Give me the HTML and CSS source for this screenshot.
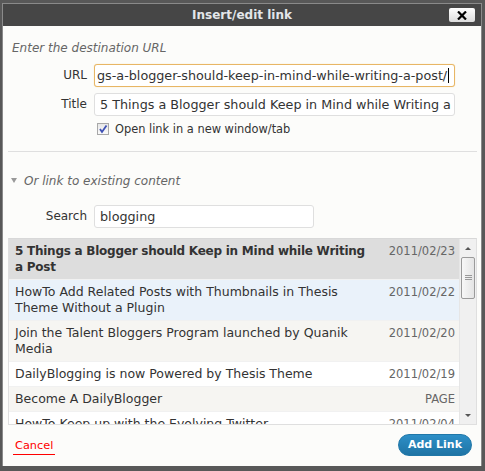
FILE: index.html
```html
<!DOCTYPE html>
<html lang="en">
<head>
	<meta charset="UTF-8">
	<title>Insert/edit link</title>
	<link rel="stylesheet" href="styles.css">
</head>
<body>
	<div class="dialog">
		<div class="titlebar">
			<span class="title">Insert/edit link</span>
			<span class="close">
				<svg width="10" height="9" viewBox="0 0 10 9"><path d="M1 0.5L9 8.5M9 0.5L1 8.5" stroke="#000" stroke-width="2.2"/></svg>
			</span>
		</div>
		<div class="content">
			<div class="url-section">
				<p class="hint">Enter the destination URL</p>
				<div class="field">
					<span class="label">URL</span>
					<div class="input url-input focused"><span class="url-text">gs-a-blogger-should-keep-in-mind-while-writing-a-post/</span><span class="caret"></span></div>
				</div>
				<div class="field">
					<span class="label">Title</span>
					<div class="input title-input">5 Things a Blogger should Keep in Mind while Writing a Post</div>
				</div>
				<div class="check-row">
					<span class="checkbox">
						<svg width="10" height="10" viewBox="0 0 10 10"><path d="M2 5L4 8L8.5 1.5" fill="none" stroke="#3f51b5" stroke-width="1.8"/></svg>
					</span>
					<span class="check-label">Open link in a new window/tab</span>
				</div>
			</div>
			<div class="search-section">
				<p class="toggle"><span class="arrow"></span>Or link to existing content</p>
				<div class="field">
					<span class="label">Search</span>
					<div class="input search-input">blogging</div>
				</div>
				<div class="results">
					<ul class="items">
						<li class="item selected"><span class="item-title">5 Things a Blogger should Keep in Mind while Writing a Post</span><span class="item-info">2011/02/23</span></li>
						<li class="item hover"><span class="item-title">HowTo Add Related Posts with Thumbnails in Thesis Theme Without a Plugin</span><span class="item-info">2011/02/22</span></li>
						<li class="item alt"><span class="item-title">Join the Talent Bloggers Program launched by Quanik Media</span><span class="item-info">2011/02/20</span></li>
						<li class="item"><span class="item-title">DailyBlogging is now Powered by Thesis Theme</span><span class="item-info">2011/02/19</span></li>
						<li class="item alt"><span class="item-title">Become A DailyBlogger</span><span class="item-info">PAGE</span></li>
						<li class="item"><span class="item-title">HowTo Keep up with the Evolving Twitter</span><span class="item-info">2011/02/04</span></li>
					</ul>
					<div class="scrollbar">
						<span class="arrow-up"></span>
						<div class="track">
							<div class="thumb"><span class="grip"></span></div>
						</div>
						<span class="arrow-down"></span>
					</div>
				</div>
			</div>
		</div>
		<div class="footer">
			<a class="cancel" href="#">Cancel</a>
			<span class="button">Add Link</span>
		</div>
	</div>
</body>
</html>
```

FILE: styles.css
```css
*{
	margin: 0;
	padding: 0;
	box-sizing: border-box;
}
body{
	background: #585858;
	font-family: "DejaVu Sans", Verdana, sans-serif;
	color: #333;
}
.dialog{
	width: 478px;
	height: 462px;
	margin: 4px 0 0 3px;
	background: #fcfcfa;
	display: flex;
	flex-direction: column;
	outline: 1px solid #8a8a8a;
}
.titlebar{
	height: 22px;
	background: #464646;
	position: relative;
	display: flex;
	align-items: center;
	justify-content: center;
}
.title{
	color: #e3e6ea;
	font-size: 12px;
	font-weight: bold;
}
.close{
	position: absolute;
	right: 6px;
	top: 4px;
	width: 26px;
	height: 14px;
	border-radius: 2px;
	background: linear-gradient(#ffffff, #dcdcdc);
	display: flex;
	align-items: center;
	justify-content: center;
}
.content{
	flex: 1;
	padding: 0 4px 0 5px;
}
.url-section{
	padding: 14px 4px 15px 4px;
	border-bottom: 1px solid #dfdfdf;
}
.hint, .toggle{
	font-size: 12px;
	font-style: italic;
	color: #666;
	line-height: 16px;
}
.hint{
	margin-bottom: 8px;
}
.field{
	display: flex;
	align-items: center;
	margin-bottom: 6px;
}
.label{
	width: 75px;
	text-align: right;
	margin-right: 7px;
	font-size: 12px;
	color: #333;
}
.input{
	height: 23px;
	border: 1px solid #dfdfdf;
	border-radius: 3px;
	background: #fff;
	font-size: 12.75px;
	line-height: 21px;
	padding: 0 5px;
	white-space: nowrap;
	overflow: hidden;
	color: #333;
}
.url-input, .title-input{
	width: 361px;
}
.focused{
	border-color: #e8b665;
	box-shadow: 0 0 1px #f0cf8f;
	display: flex;
	padding: 0 2px;
}
.url-text{
	flex-shrink: 0;
}
.caret{
	flex-shrink: 0;
	width: 1px;
	height: 15px;
	margin: 3px 0 0 1px;
	background: #000;
}
.check-row{
	display: flex;
	align-items: center;
	margin-left: 85px;
	margin-top: 5px;
}
.checkbox{
	width: 12px;
	height: 12px;
	border: 1px solid #a8a8a8;
	background: linear-gradient(#e8e8e8, #fafafa);
	display: flex;
	align-items: center;
	justify-content: center;
	margin-right: 6px;
}
.check-label{
	font-size: 11.4px;
	color: #333;
}
.search-section{
	padding-top: 21px;
}
.toggle{
	padding-left: 3px;
	margin-bottom: 16px;
	display: flex;
	align-items: center;
}
.arrow{
	width: 0;
	height: 0;
	border-left: 3px solid transparent;
	border-right: 3px solid transparent;
	border-top: 5px solid #999;
	margin-right: 7px;
}
.search-section .field{
	margin-left: 4px;
	margin-bottom: 10px;
}
.search-input{
	width: 220px;
}
.results{
	height: 187px;
	border: 1px solid #dfdfdf;
	border-top-color: #d8d8d8;
	display: flex;
	overflow: hidden;
	background: #fff;
}
.items{
	flex: 1;
	list-style: none;
	overflow: hidden;
}
.item{
	display: flex;
	justify-content: space-between;
	align-items: flex-start;
	padding: 4px 4px 4px 6px;
	border-bottom: 1px solid #f1f1f1;
	font-size: 12.5px;
	line-height: 16px;
	background: #fff;
}
.item.alt{
	background: #f6f5f2;
}
.item.hover{
	background: #eaf2fa;
}
.item.selected{
	background: #dddddd;
	font-weight: bold;
}
.item.selected .item-title{
	font-size: 12px;
	letter-spacing: -0.25px;
}
.item-title{
	flex: 1;
	padding-right: 19px;
}
.item-info{
	color: #666;
	font-size: 11.5px;
	font-weight: normal;
	white-space: nowrap;
}
.scrollbar{
	width: 17px;
	background: #f0f0f0;
	border-left: 1px solid #e6e6e6;
	display: flex;
	flex-direction: column;
	align-items: center;
}
.arrow-up, .arrow-down{
	width: 0;
	height: 0;
	border-left: 3px solid transparent;
	border-right: 3px solid transparent;
	margin: 8px 0 7px 0;
}
.arrow-up{
	border-bottom: 3px solid #555;
}
.arrow-down{
	border-top: 3px solid #555;
}
.track{
	flex: 1;
	width: 100%;
	padding: 0 1px;
}
.thumb{
	height: 42px;
	border: 1px solid #9a9a9a;
	border-radius: 2px;
	background: linear-gradient(to right, #f7f7f7, #e4e4e4);
	display: flex;
	align-items: center;
	justify-content: center;
}
.grip{
	width: 7px;
	height: 5px;
	border-top: 1px solid #999;
	border-bottom: 1px solid #999;
	position: relative;
}
.grip::after{
	content: "";
	position: absolute;
	left: 0;
	right: 0;
	top: 1px;
	border-top: 1px solid #999;
}
.footer{
	height: 42px;
	display: flex;
	justify-content: space-between;
	align-items: flex-end;
	padding: 0 9px 10px 10px;
}
.cancel{
	color: #f00;
	font-size: 11.3px;
	line-height: 15px;
	text-decoration: none;
	padding: 0 2px 1px 2px;
	border-bottom: 1px solid #f00;
	margin-bottom: 1px;
}
.button{
	background: linear-gradient(#2d8fc7, #1f74a5);
	color: #fff;
	font-size: 11px;
	font-weight: bold;
	height: 22px;
	line-height: 20px;
	padding: 0 9px;
	border-radius: 11px;
	border: 1px solid #2077a8;
}
```
